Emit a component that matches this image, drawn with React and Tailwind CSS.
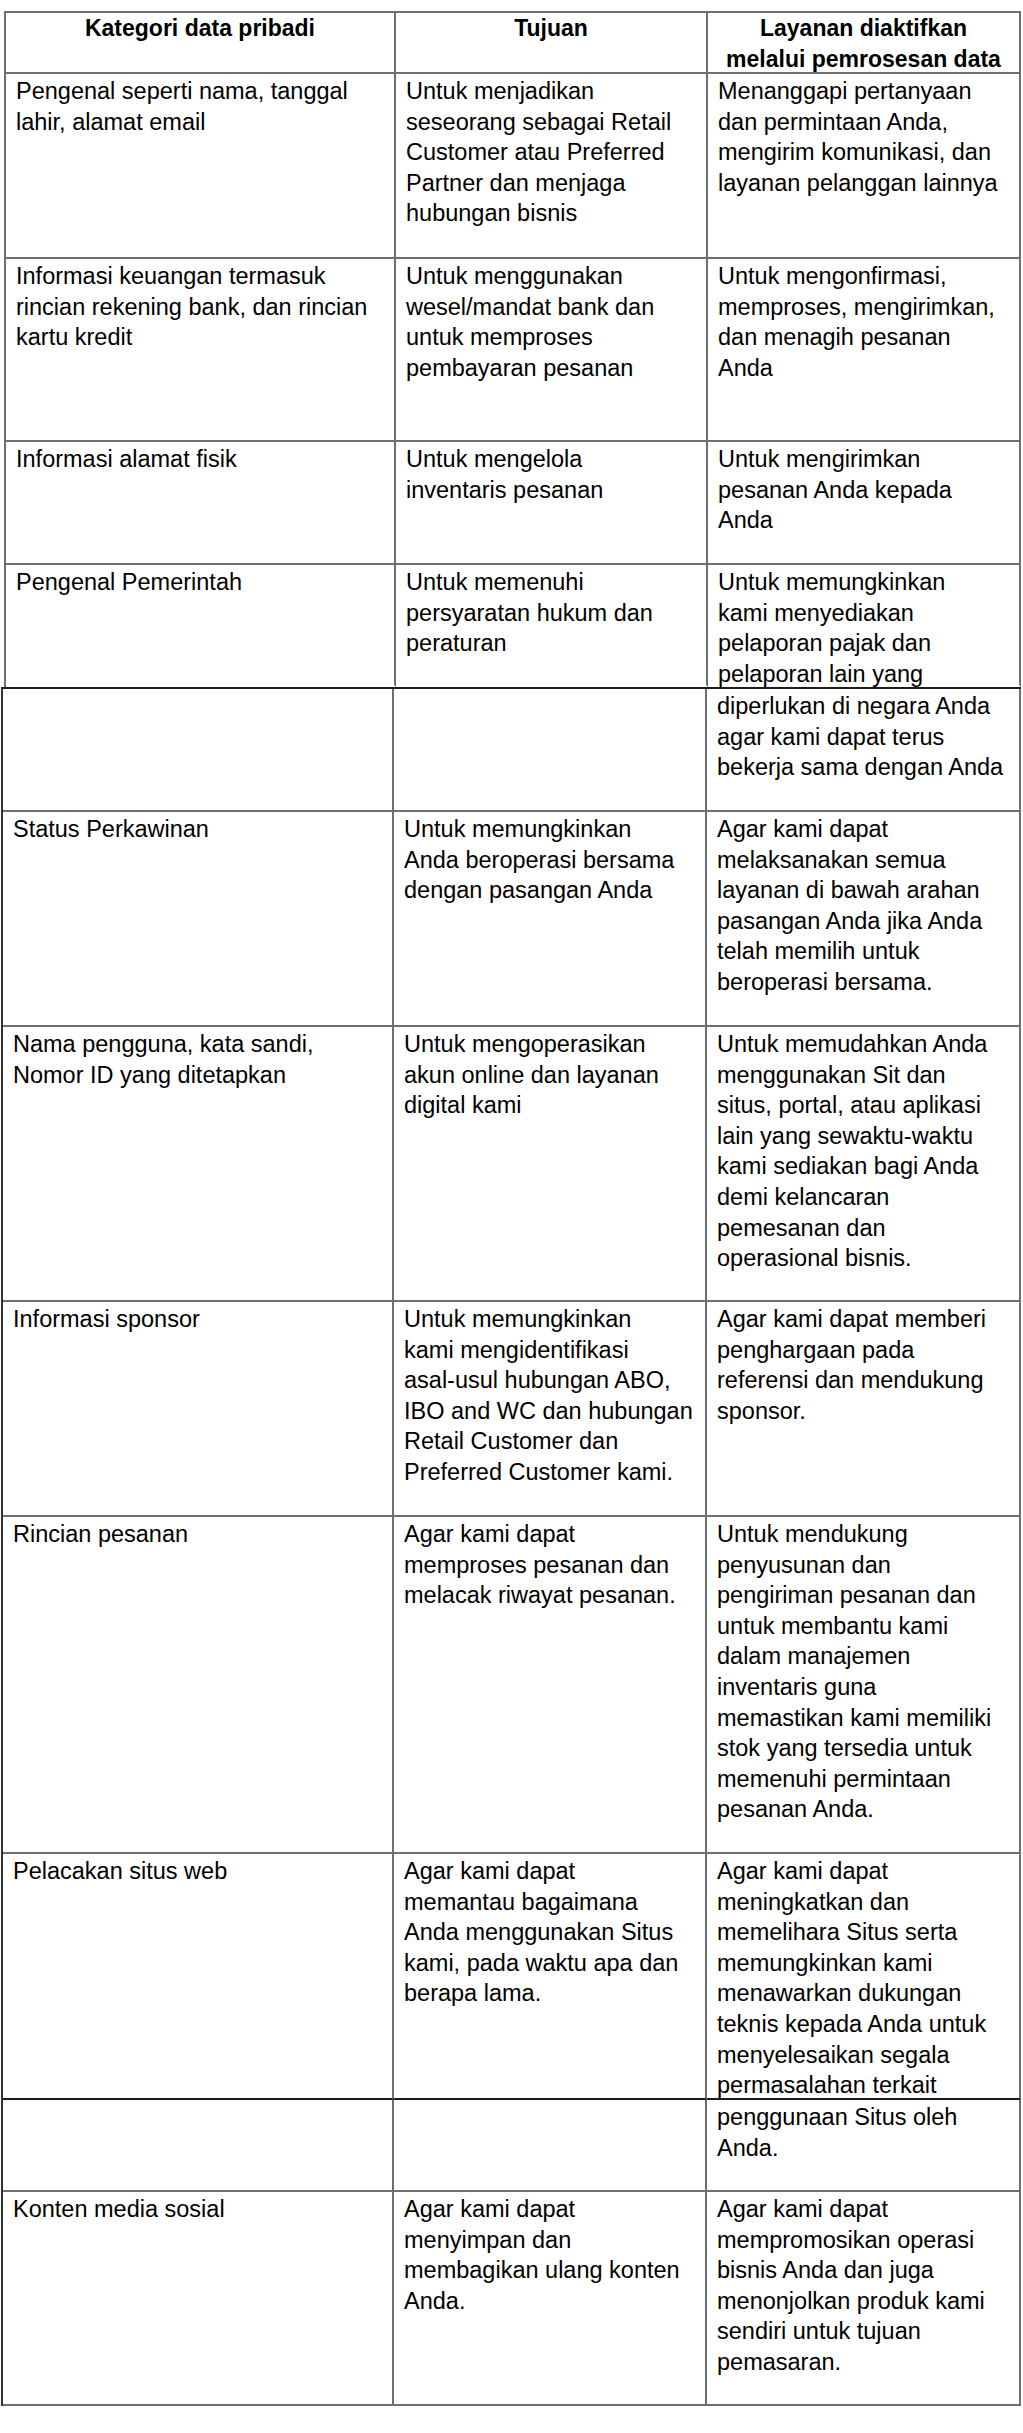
import React from "react";

// each cell is a list of lines, broken as in the source document
const topRows = [
  {
    h: "h-[185px]",
    cells: [
      ["Pengenal seperti nama, tanggal", "lahir, alamat email"],
      ["Untuk menjadikan", "seseorang sebagai Retail", "Customer atau Preferred", "Partner dan menjaga", "hubungan bisnis"],
      ["Menanggapi pertanyaan", "dan permintaan Anda,", "mengirim komunikasi, dan", "layanan pelanggan lainnya"],
    ],
  },
  {
    h: "h-[183px]",
    cells: [
      ["Informasi keuangan termasuk", "rincian rekening bank, dan rincian", "kartu kredit"],
      ["Untuk menggunakan", "wesel/mandat bank dan", "untuk memproses", "pembayaran pesanan"],
      ["Untuk mengonfirmasi,", "memproses, mengirimkan,", "dan menagih pesanan", "Anda"],
    ],
  },
  {
    h: "h-[123px]",
    cells: [
      ["Informasi alamat fisik"],
      ["Untuk mengelola", "inventaris pesanan"],
      ["Untuk mengirimkan", "pesanan Anda kepada", "Anda"],
    ],
  },
  {
    h: "h-[122px]",
    last: true,
    cells: [
      ["Pengenal Pemerintah"],
      ["Untuk memenuhi", "persyaratan hukum dan", "peraturan"],
      ["Untuk memungkinkan", "kami menyediakan", "pelaporan pajak dan", "pelaporan lain yang"],
    ],
  },
];

const bottomRows = [
  {
    h: "h-[123px]",
    cells: [[], [], ["diperlukan di negara Anda", "agar kami dapat terus", "bekerja sama dengan Anda"]],
  },
  {
    h: "h-[215px]",
    cells: [
      ["Status Perkawinan"],
      ["Untuk memungkinkan", "Anda beroperasi bersama", "dengan pasangan Anda"],
      ["Agar kami dapat", "melaksanakan semua", "layanan di bawah arahan", "pasangan Anda jika Anda", "telah memilih untuk", "beroperasi bersama."],
    ],
  },
  {
    h: "h-[275px]",
    cells: [
      ["Nama pengguna, kata sandi,", "Nomor ID yang ditetapkan"],
      ["Untuk mengoperasikan", "akun online dan layanan", "digital kami"],
      ["Untuk memudahkan Anda", "menggunakan Sit dan", "situs, portal, atau aplikasi", "lain yang sewaktu-waktu", "kami sediakan bagi Anda", "demi kelancaran", "pemesanan dan", "operasional bisnis."],
    ],
  },
  {
    h: "h-[215px]",
    cells: [
      ["Informasi sponsor"],
      ["Untuk memungkinkan", "kami mengidentifikasi", "asal-usul hubungan ABO,", "IBO and WC dan hubungan", "Retail Customer dan", "Preferred Customer kami."],
      ["Agar kami dapat memberi", "penghargaan pada", "referensi dan mendukung", "sponsor."],
    ],
  },
  {
    h: "h-[337px]",
    cells: [
      ["Rincian pesanan"],
      ["Agar kami dapat", "memproses pesanan dan", "melacak riwayat pesanan."],
      ["Untuk mendukung", "penyusunan dan", "pengiriman pesanan dan", "untuk membantu kami", "dalam manajemen", "inventaris guna", "memastikan kami memiliki", "stok yang tersedia untuk", "memenuhi permintaan", "pesanan Anda."],
    ],
  },
  {
    h: "h-[246px]",
    pageBreak: true,
    cells: [
      ["Pelacakan situs web"],
      ["Agar kami dapat", "memantau bagaimana", "Anda menggunakan Situs", "kami, pada waktu apa dan", "berapa lama."],
      ["Agar kami dapat", "meningkatkan dan", "memelihara Situs serta", "memungkinkan kami", "menawarkan dukungan", "teknis kepada Anda untuk", "menyelesaikan segala", "permasalahan terkait"],
    ],
  },
  {
    h: "h-[92px]",
    cells: [[], [], ["penggunaan Situs oleh", "Anda."]],
  },
  {
    h: "h-[214px]",
    cells: [
      ["Konten media sosial"],
      ["Agar kami dapat", "menyimpan dan", "membagikan ulang konten", "Anda."],
      ["Agar kami dapat", "mempromosikan operasi", "bisnis Anda dan juga", "menonjolkan produk kami", "sendiri untuk tujuan", "pemasaran."],
    ],
  },
];

const topWidths = ["w-[390px]", "w-[312px]", "w-[313px]"];
const bottomWidths = ["w-[391px]", "w-[313px]", "w-[314px]"];

function Lines({ lines }) {
  return (
    <>
      {lines.map((line, i) => (
        <div key={i} className="whitespace-nowrap leading-[30.6px]">
          {line}
        </div>
      ))}
    </>
  );
}

function Row({ row, widths }) {
  const bottom = row.pageBreak
    ? "border-b-[#1c1c1c]"
    : row.last
    ? "border-b-transparent"
    : "border-b-[#6f6f6f]";
  return (
    <div className={`flex ${row.h}`}>
      {row.cells.map((cell, i) => (
        <div
          key={i}
          className={`${widths[i]} shrink-0 border-r-2 border-b-2 border-r-[#6f6f6f] ${bottom} pl-[10px] pt-[2px]`}
        >
          <Lines lines={cell} />
        </div>
      ))}
    </div>
  );
}

export default function App() {
  return (
    <div className="min-h-[2433px] bg-white text-black text-[23.5px] font-['Liberation_Sans',Arial,sans-serif]">
      {/* first page part of the table */}
      <div className="ml-[4px] pt-[11px]">
        <div className="w-[1017px] border-l-2 border-t-2 border-[#6f6f6f]">
          <div className="flex h-[61px] font-bold text-[23px]">
            <div className="w-[390px] shrink-0 border-r-2 border-b-2 border-[#6f6f6f] text-center">
              <Lines lines={["Kategori data pribadi"]} />
            </div>
            <div className="w-[312px] shrink-0 border-r-2 border-b-2 border-[#6f6f6f] text-center">
              <Lines lines={["Tujuan"]} />
            </div>
            <div className="w-[313px] shrink-0 border-r-2 border-b-2 border-[#6f6f6f] text-center">
              <Lines lines={["Layanan diaktifkan", "melalui pemrosesan data"]} />
            </div>
          </div>
          {topRows.map((row, i) => (
            <Row key={i} row={row} widths={topWidths} />
          ))}
        </div>
      </div>

      {/* continued after the page break */}
      <div className="ml-[1px]">
        <div className="w-[1020px] border-l-2 border-t-2 border-l-[#333333] border-t-[#1c1c1c]">
          {bottomRows.map((row, i) => (
            <Row key={i} row={row} widths={bottomWidths} />
          ))}
        </div>
      </div>
    </div>
  );
}
